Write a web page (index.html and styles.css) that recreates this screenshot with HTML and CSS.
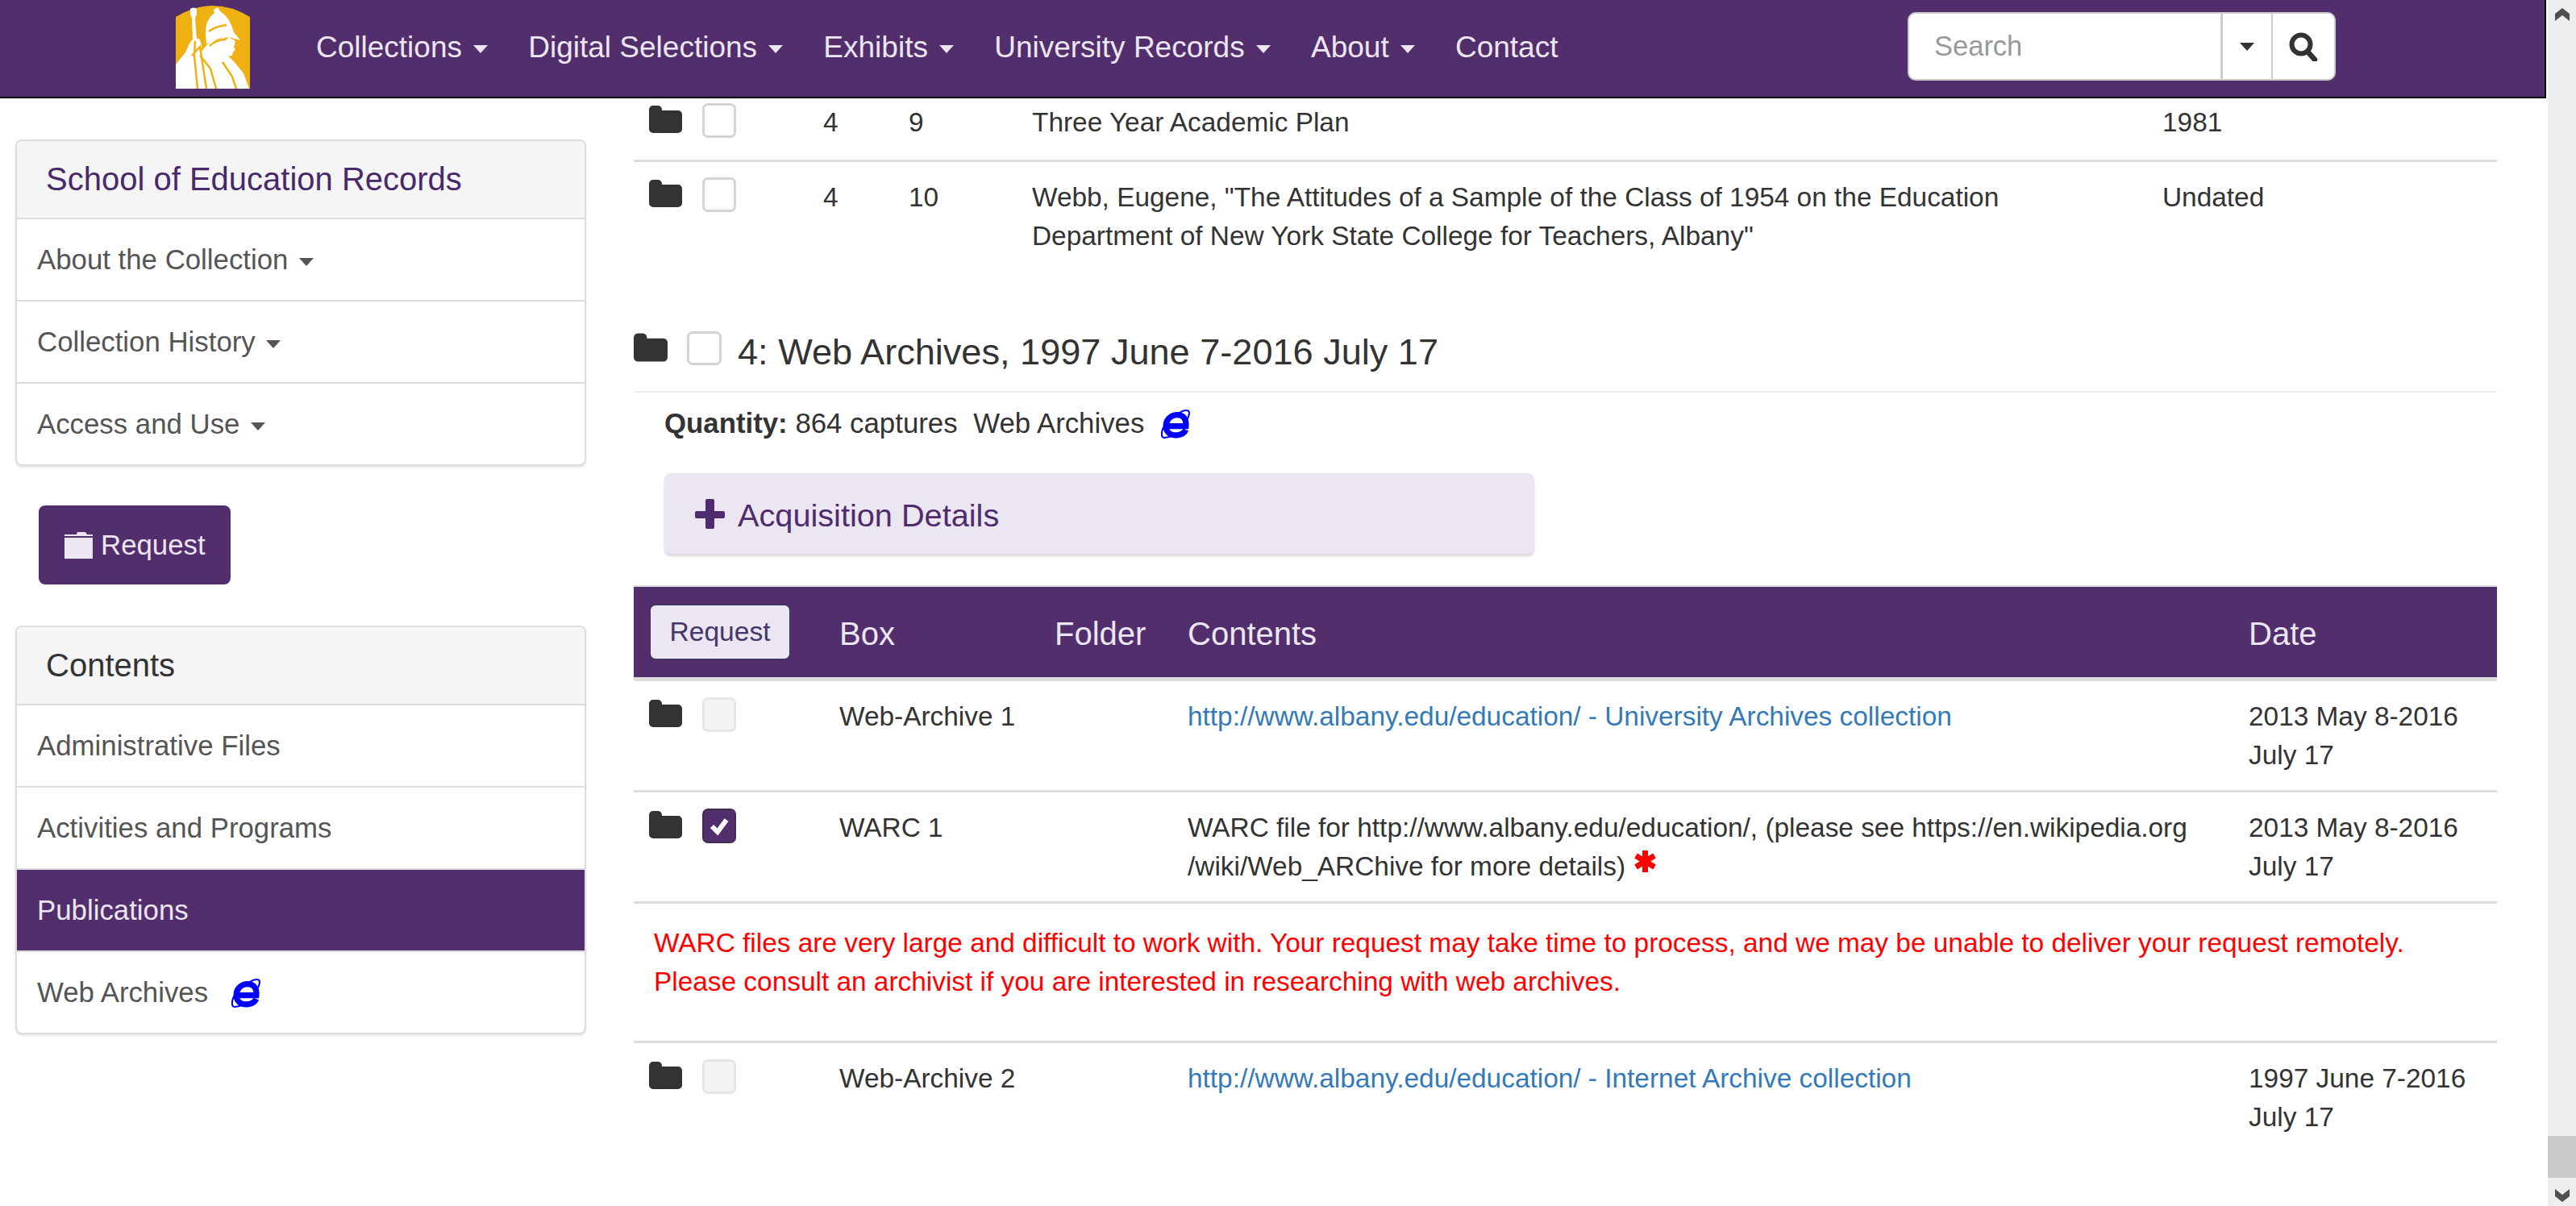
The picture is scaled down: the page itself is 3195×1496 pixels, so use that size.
FILE: index.html
```html
<!DOCTYPE html>
<html lang="en">
<head>
    <meta charset="UTF-8">
    <meta name="viewport" content="width=device-width, initial-scale=1.0">
    <title>School of Education Records</title>
    <link rel="stylesheet" href="styles.css">
</head>
<body>

<svg class="icon-defs" aria-hidden="true">
    <symbol id="folder" viewBox="0 0 41 34">
        <path d="M5 0h6a5 5 0 0 1 5 5v1h20a5 5 0 0 1 5 5v18a5 5 0 0 1-5 5H5a5 5 0 0 1-5-5V5a5 5 0 0 1 5-5z" fill="#333"/>
    </symbol>
    <symbol id="ie" viewBox="0 0 35 35">
        <path d="M22 4C28 0 34 0 34 4C34 7 33 10 30 14M3 21C0 28 0 34 4 34C8 34 11 33 15 31" fill="none" stroke="#00f" stroke-width="2"/>
        <path d="M7 20H30C31 11 26 6 19 6.500C11 7 5.500 13 6 21C6.500 28 12 31.500 19 31C25 30.500 28.500 28 30 24.500" fill="none" stroke="#00f" stroke-width="7"/>
    </symbol>
</svg>

<div class="page">
    <div class="viewport">
        <nav class="navbar">
            <svg class="logo" viewBox="0 0 92 103">
                <path d="M0 14Q46-14 92 14V103H0z" fill="#eeb111"/>
                <path d="M18 4Q22 1 26 4L26 11 24 15 26 42 21 42 20 15 18 11z" fill="#fff"/>
                <path d="M0 73 12 58 18 45Q24 38 30 42L32 50 31 58 39 48 44 44 60 40 68 52 62 60 72 69 84 84 91 103H0z" fill="#fff"/>
                <path d="M37 36Q36 18 48 9L47 5 52 2 55 7Q67 14 72 33L80 43 66 39 52 41 42 46 38 47z" fill="#fff"/>
                <path d="M66 39 74 44 72 52 74 54 71 58 70 62 62 63 52 52z" fill="#fff"/>
                <path d="M41 32Q48 26 63 24" fill="none" stroke="#eeb111" stroke-width="2.500"/>
                <path d="M24 44 23 62 27 103M20 62 30 51 38 103M30 62 43 78 50 103M42 50Q50 42 62 42M58 70 70 88 75 103" fill="none" stroke="#eeb111" stroke-width="2.500"/>
            </svg>
            <ul class="nav-links">
                <li>Collections <span class="caret"></span></li>
                <li>Digital Selections <span class="caret"></span></li>
                <li>Exhibits <span class="caret"></span></li>
                <li>University Records <span class="caret"></span></li>
                <li>About <span class="caret"></span></li>
                <li>Contact</li>
            </ul>
            <div class="search-group">
                <span class="search-input">Search</span>
                <span class="search-drop"><span class="caret caret-dark"></span></span>
                <span class="search-btn">
                    <svg class="search-icon" viewBox="0 0 36 36">
                        <circle cx="15" cy="15" r="11.500" fill="none" stroke="#333" stroke-width="6"/>
                        <path d="M23 24 32 34" fill="none" stroke="#333" stroke-width="6.500" stroke-linecap="round"/>
                    </svg>
                </span>
            </div>
        </nav>

        <div class="content">
            <aside class="sidebar">
                <div class="panel">
                    <div class="panel-heading panel-heading-purple">School of Education Records</div>
                    <div class="panel-item">About the Collection <span class="caret caret-grey"></span></div>
                    <div class="panel-item">Collection History <span class="caret caret-grey"></span></div>
                    <div class="panel-item">Access and Use <span class="caret caret-grey"></span></div>
                </div>
                <a class="request-btn">
                    <svg class="request-icon" viewBox="0 0 35 33">
                        <path d="M0 3h15l1-3h10l2 3h7v2H0zM0 7h35v26H0z" fill="#ebe6f1"/>
                    </svg>
                    Request
                </a>
                <div class="panel">
                    <div class="panel-heading">Contents</div>
                    <div class="panel-item">Administrative Files</div>
                    <div class="panel-item">Activities and Programs</div>
                    <div class="panel-item active">Publications</div>
                    <div class="panel-item">Web Archives <svg class="ie-icon ie-side"><use href="#ie"/></svg></div>
                </div>
            </aside>

            <main class="main">
                <table class="file-table top-table">
                    <colgroup>
                        <col class="c1"><col class="c2"><col class="c3"><col class="c4"><col class="c5">
                    </colgroup>
                    <tbody>
                        <tr class="cut-row">
                            <td><div class="select-cell"><svg class="folder"><use href="#folder"/></svg><span class="check"></span></div></td>
                            <td>4</td>
                            <td>9</td>
                            <td>Three Year Academic Plan</td>
                            <td>1981</td>
                        </tr>
                        <tr>
                            <td><div class="select-cell"><svg class="folder"><use href="#folder"/></svg><span class="check"></span></div></td>
                            <td>4</td>
                            <td>10</td>
                            <td>Webb, Eugene, "The Attitudes of a Sample of the Class of 1954 on the Education Department of New York State College for Teachers, Albany"</td>
                            <td>Undated</td>
                        </tr>
                    </tbody>
                </table>

                <div class="series-heading">
                    <svg class="folder-big"><use href="#folder"/></svg>
                    <span class="check check-big"></span>
                    <h3>4: Web Archives, 1997 June 7-2016 July 17</h3>
                </div>
                <p class="quantity"><b>Quantity:</b> 864 captures <span class="qty-type">Web Archives</span> <svg class="ie-icon"><use href="#ie"/></svg></p>
                <div class="acq-box">
                    <svg class="plus-icon" viewBox="0 0 37 37">
                        <path d="M15 0h7a2 2 0 0 1 2 2v13h11a2 2 0 0 1 2 2v5a2 2 0 0 1-2 2H24v11a2 2 0 0 1-2 2h-7a2 2 0 0 1-2-2V24H2a2 2 0 0 1-2-2v-5a2 2 0 0 1 2-2h11V2a2 2 0 0 1 2-2z" fill="#4f2c6e"/>
                    </svg>
                    <span class="acq-text">Acquisition Details</span>
                </div>

                <table class="file-table web-table">
                    <colgroup>
                        <col class="w1"><col class="w2"><col class="w3"><col class="w4"><col class="w5">
                    </colgroup>
                    <thead>
                        <tr>
                            <th><button class="th-request">Request</button></th>
                            <th>Box</th>
                            <th>Folder</th>
                            <th>Contents</th>
                            <th>Date</th>
                        </tr>
                    </thead>
                    <tbody>
                        <tr>
                            <td><div class="select-cell"><svg class="folder"><use href="#folder"/></svg><span class="check disabled"></span></div></td>
                            <td colspan="2">Web-Archive 1</td>
                            <td><a href="#">http://www.albany.edu/education/ - University Archives collection</a></td>
                            <td>2013 May 8-2016 July 17</td>
                        </tr>
                        <tr>
                            <td><div class="select-cell"><svg class="folder"><use href="#folder"/></svg>
                                <span class="check checked">
                                    <svg class="tick" viewBox="0 0 24 22"><path d="M3 11 10 18 21 3" fill="none" stroke="#fff" stroke-width="6"/></svg>
                                </span></div></td>
                            <td colspan="2">WARC 1</td>
                            <td>WARC file for http://www.albany.edu/education/, (please see https://en.wikipedia.org<wbr>/wiki/Web_ARChive for more details)
                                <svg class="star" viewBox="0 0 27 27"><path d="M13.500 0V27M2 6.500 25 20.500M25 6.500 2 20.500" fill="none" stroke="#f00" stroke-width="7"/></svg></td>
                            <td>2013 May 8-2016 July 17</td>
                        </tr>
                        <tr>
                            <td class="warning" colspan="5">WARC files are very large and difficult to work with. Your request may take time to process, and we may be unable to deliver your request remotely.<br>Please consult an archivist if you are interested in researching with web archives.</td>
                        </tr>
                        <tr>
                            <td><div class="select-cell"><svg class="folder"><use href="#folder"/></svg><span class="check disabled"></span></div></td>
                            <td colspan="2">Web-Archive 2</td>
                            <td><a href="#">http://www.albany.edu/education/ - Internet Archive collection</a></td>
                            <td>1997 June 7-2016 July 17</td>
                        </tr>
                    </tbody>
                </table>
            </main>
        </div>
    </div>

    <div class="scrollbar">
        <svg class="scroll-arrow" viewBox="0 0 18 16"><path d="M9 0 18 7V16L9 9 0 16V7z" fill="#505050"/></svg>
        <div class="scroll-thumb"></div>
        <svg class="scroll-arrow" viewBox="0 0 18 16"><path d="M0 0 9 7 18 0V9L9 16 0 9z" fill="#505050"/></svg>
    </div>
</div>

</body>
</html>
```

FILE: styles.css
```css
* {
    box-sizing: border-box;
}
body {
    font-family: "Liberation Sans", Arial, sans-serif;
    font-size: 33.4px;
    line-height: 48px;
    color: #333;
    background-color: #fff;
    margin: 0;
    padding: 0;
    overflow: hidden;
}
.icon-defs {
    display: none;
}
.page {
    display: flex;
    height: 1496px;
    overflow: hidden;
}
.viewport {
    width: 3160px;
    flex: none;
}
.caret {
    display: inline-block;
    width: 0;
    height: 0;
    margin-left: 4px;
    vertical-align: middle;
    border-top: 10px solid #ebe6f1;
    border-left: 9.6px solid transparent;
    border-right: 9.6px solid transparent;
}
.caret-dark {
    border-top-color: #333;
    margin-left: 0;
}
.caret-grey {
    border-top-color: #555;
}

/* top bar */
.navbar {
    display: flex;
    align-items: center;
    width: 3158px;
    height: 122px;
    padding-left: 218px;
    padding-bottom: 2px;
    background-color: #522e6c;
    border-bottom: 2px solid #000;
    border-right: 2px solid #000;
}
.logo {
    width: 92px;
    height: 103px;
    flex: none;
    margin-top: -2px;
}
.nav-links {
    display: flex;
    gap: 50px;
    list-style: none;
    margin: 0 0 0 82px;
    padding: 0;
    font-size: 37px;
    color: #ebe6f1;
}
.search-group {
    display: flex;
    width: 531px;
    height: 85px;
    margin-left: auto;
    margin-right: 259px;
    margin-top: -3px;
    background-color: #fff;
    border: 2px solid #ccc;
    border-radius: 10px;
}
.search-input {
    width: 389px;
    padding-left: 31px;
    line-height: 80px;
    font-size: 34.5px;
    color: #999;
    border-right: 3px solid #ccc;
}
.search-drop {
    display: flex;
    align-items: center;
    justify-content: center;
    width: 62px;
    border-right: 2px solid #ccc;
}
.search-btn {
    display: flex;
    align-items: center;
    justify-content: center;
    flex: 1;
}
.search-icon {
    width: 36px;
    height: 36px;
}

/* left column */
.content {
    display: flex;
    align-items: flex-start;
}
.sidebar {
    width: 786px;
    flex: none;
    padding: 51px 0 0 19px;
}
.panel {
    width: 708px;
    background-color: #fff;
    border: 2px solid #ddd;
    border-radius: 8px;
    box-shadow: 0 2px 3px rgba(0, 0, 0, 0.1);
    overflow: hidden;
    font-size: 34.8px;
}
.panel-heading {
    height: 95px;
    display: flex;
    align-items: center;
    padding-left: 36px;
    padding-bottom: 1px;
    font-size: 40px;
    background-color: #f5f5f5;
}
.panel-heading-purple {
    color: #482a6c;
}
.panel-item {
    height: 102px;
    padding: 26px 0 0 25px;
    color: #555;
    border-top: 2px solid #ddd;
}
.panel-item.active {
    color: #ebe6f1;
    background-color: #522e6c;
}
.request-btn {
    display: flex;
    align-items: center;
    gap: 10px;
    width: 238px;
    height: 98px;
    margin: 49px 0 51px 29px;
    padding-left: 32px;
    font-size: 34.8px;
    color: #ebe6f1;
    background-color: #522e6c;
    border-radius: 8px;
}
.request-icon {
    width: 35px;
    height: 33px;
}

/* main column */
.main {
    width: 2311px;
    flex: none;
}
.file-table {
    width: 100%;
    table-layout: fixed;
    border-collapse: separate;
    border-spacing: 0;
}
.file-table td {
    padding: 20px 19px 18px;
    vertical-align: top;
}
.file-table tbody tr + tr td {
    border-top: 3px solid #ddd;
}
.top-table .select-cell {
    margin-top: -1px;
}
.top-table .cut-row td {
    padding-top: 6px;
    padding-bottom: 22px;
}
.top-table .cut-row .select-cell {
    margin-top: 0;
}
.c1 { width: 216px; }
.c2 { width: 106px; }
.c3 { width: 153px; }
.c4 { width: 1402px; }
.c5 { width: 434px; }
.w1 { width: 236px; }
.w2 { width: 267px; }
.w3 { width: 165px; }
.w4 { width: 1316px; }
.w5 { width: 327px; }
.select-cell {
    display: flex;
    align-items: flex-start;
    gap: 25px;
}
.folder {
    width: 41px;
    height: 34px;
    margin-top: 3px;
    flex: none;
}
.check {
    display: block;
    width: 42px;
    height: 43px;
    flex: none;
    background-color: #fff;
    border: 3px solid #d4d4d4;
    border-radius: 7px;
}
.check.disabled {
    background-color: #f3f3f3;
    border-color: #e6e6e6;
}
.check.checked {
    display: flex;
    align-items: center;
    justify-content: center;
    background-color: #522e6c;
    border: 2px dotted #333;
}
.tick {
    width: 24px;
    height: 22px;
}
.series-heading {
    display: flex;
    align-items: flex-start;
    margin-top: 75px;
    padding-bottom: 21px;
    border-bottom: 2px solid #eee;
}
.folder-big {
    width: 42px;
    height: 36px;
    margin-top: 3px;
    flex: none;
}
.check-big {
    width: 43px;
    height: 42px;
    margin: 1px 20px 0 24px;
}
.series-heading h3 {
    margin: 0;
    font-size: 45.1px;
    line-height: 54px;
    font-weight: normal;
}
.quantity {
    margin: 14px 0 0;
    padding-left: 38px;
    font-size: 34.8px;
}
.qty-type {
    margin-left: 10px;
}
.ie-icon {
    width: 36px;
    height: 36px;
    vertical-align: -7px;
    margin-left: 11px;
}
.ie-side {
    margin-left: 19px;
}
.acq-box {
    display: flex;
    align-items: center;
    gap: 16px;
    width: 1079px;
    height: 100px;
    margin: 38px 0 39px 38px;
    padding-left: 38px;
    font-size: 39.7px;
    color: #4f2c6e;
    background-color: #ebe6f1;
    border-radius: 8px;
    box-shadow: 0 3px 3px rgba(0, 0, 0, 0.15);
}
.acq-text {
    padding-top: 3px;
}
.plus-icon {
    width: 37px;
    height: 37px;
}
.web-table {
    border-top: 2px solid #ddd;
}
.web-table th {
    height: 117px;
    padding: 3px 19px 0;
    text-align: left;
    font-size: 40px;
    font-weight: normal;
    color: #ebe6f1;
    background-color: #522e6c;
    border-bottom: 5px solid #ddd;
}
.th-request {
    display: block;
    width: 176px;
    height: 70px;
    margin-top: -3px;
    padding: 0;
    font-family: inherit;
    font-size: 33.6px;
    color: #46366a;
    background-color: #ebe6f1;
    border: 2px solid #3f3566;
    border-radius: 8px;
}
.web-table tbody td {
    padding-bottom: 19px;
}
.web-table tbody tr:first-child td {
    border-top: 0;
}
.file-table a {
    color: #337ab7;
    text-decoration: none;
}
.star {
    width: 27px;
    height: 27px;
    margin-left: 2px;
    vertical-align: 4px;
}
.file-table td.warning {
    padding: 25px 25px 49px;
    color: #f00;
}

/* fake scrollbar, the page is shown part way down */
.scrollbar {
    display: flex;
    flex-direction: column;
    align-items: center;
    width: 35px;
    flex: none;
    padding: 10px 0 5px;
    background-color: #eee;
}
.scroll-arrow {
    width: 18px;
    height: 16px;
    flex: none;
}
.scroll-thumb {
    width: 100%;
    height: 52px;
    margin-top: auto;
    margin-bottom: 14px;
    background-color: #c9c9c9;
}
```
